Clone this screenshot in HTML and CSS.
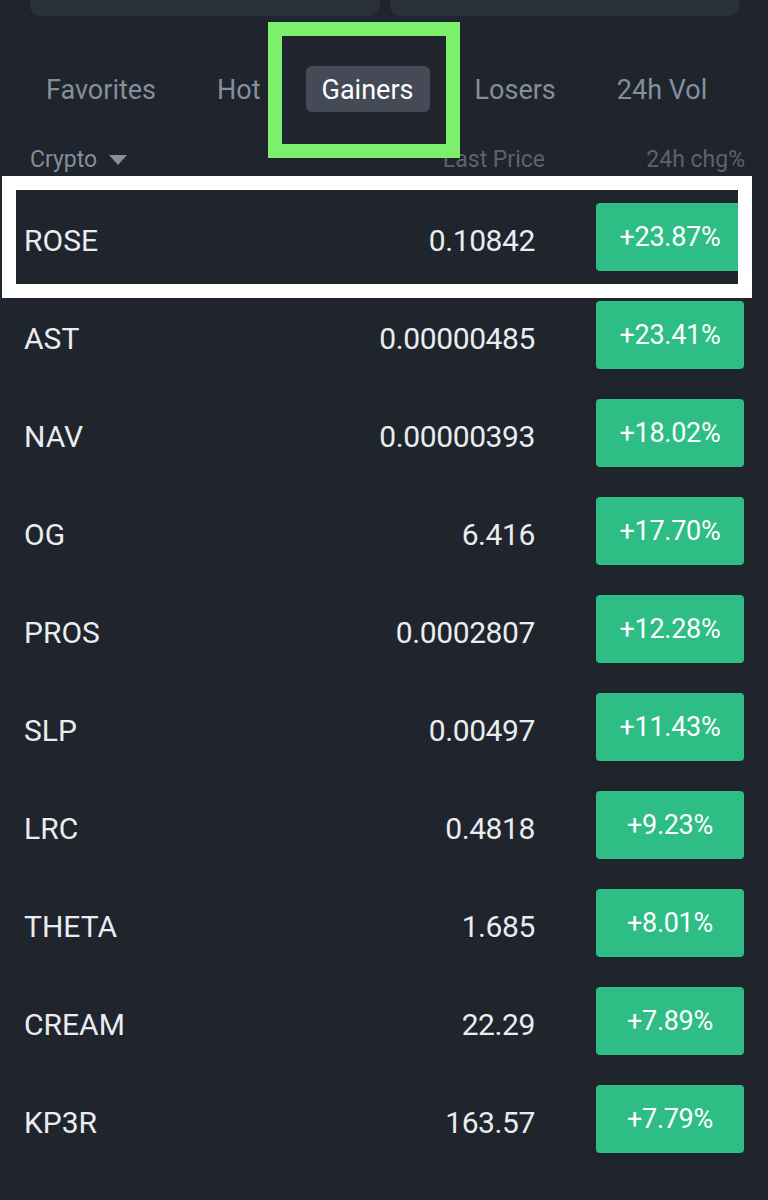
FILE: index.html
```html
<!DOCTYPE html>
<html>
<head>
<meta charset="utf-8">
<link rel="stylesheet" href="styles.css">
</head>
<body>
<div class="page">
  <div class="top-cards">
    <div class="card"></div>
    <div class="card"></div>
  </div>
  <nav class="tabs">
    <span class="tab">Favorites</span>
    <span class="tab">Hot</span>
    <span class="tab active">Gainers</span>
    <span class="tab">Losers</span>
    <span class="tab">24h Vol</span>
  </nav>
  <div class="head">
    <span class="h-crypto">Crypto <span class="caret"></span></span>
    <span class="h-price">Last Price</span>
    <span class="h-chg">24h chg%</span>
  </div>
  <div class="list">
    <div class="row"><span class="sym">ROSE</span><span class="price">0.10842</span><span class="chg">+23.87%</span></div>
    <div class="row"><span class="sym">AST</span><span class="price">0.00000485</span><span class="chg">+23.41%</span></div>
    <div class="row"><span class="sym">NAV</span><span class="price">0.00000393</span><span class="chg">+18.02%</span></div>
    <div class="row"><span class="sym">OG</span><span class="price">6.416</span><span class="chg">+17.70%</span></div>
    <div class="row"><span class="sym">PROS</span><span class="price">0.0002807</span><span class="chg">+12.28%</span></div>
    <div class="row"><span class="sym">SLP</span><span class="price">0.00497</span><span class="chg">+11.43%</span></div>
    <div class="row"><span class="sym">LRC</span><span class="price">0.4818</span><span class="chg">+9.23%</span></div>
    <div class="row"><span class="sym">THETA</span><span class="price">1.685</span><span class="chg">+8.01%</span></div>
    <div class="row"><span class="sym">CREAM</span><span class="price">22.29</span><span class="chg">+7.89%</span></div>
    <div class="row"><span class="sym">KP3R</span><span class="price">163.57</span><span class="chg">+7.79%</span></div>
  </div>
  <div class="mark-green"></div>
  <div class="mark-white"></div>
</div>
</body>
</html>
```
FILE: styles.css
```css
html, body {
  margin: 0;
  padding: 0;
  background: #1f242d;
}
.page {
  position: relative;
  width: 768px;
  height: 1200px;
  overflow: hidden;
  font-family: Roboto, "Liberation Sans", sans-serif;
  background: #1f242d;
}
.top-cards {
  display: flex;
  gap: 10px;
  padding: 0 29px 0 30px;
  height: 16px;
}
.card {
  flex: 1;
  background: #2a303a;
  border-radius: 0 0 10px 10px;
}
.tabs {
  display: flex;
  align-items: center;
  gap: 29px;
  margin-top: 50px;
  padding-left: 30px;
}
.tab {
  height: 46px;
  line-height: 48px;
  padding: 0 16px;
  font-size: 27px;
  color: #848e9c;
  border-radius: 6px;
}
.tab.active {
  background: #444b57;
  color: #ffffff;
}
.head {
  display: flex;
  align-items: center;
  margin-top: 34px;
  padding: 0 23px 0 30px;
  height: 26px;
  font-size: 23px;
}
.h-crypto {
  flex: 1;
  color: #848e9c;
  display: flex;
  align-items: center;
  gap: 12px;
}
.caret {
  width: 0;
  height: 0;
  border-left: 9px solid transparent;
  border-right: 9px solid transparent;
  border-top: 10px solid #848e9c;
  margin-top: 2px;
}
.h-price {
  color: #5c6370;
}
.h-chg {
  width: 200px;
  text-align: right;
  color: #5c6370;
}
.list {
  margin-top: 16px;
}
.row {
  display: flex;
  align-items: center;
  height: 98px;
  padding: 0 24px;
  color: #eaecef;
  font-size: 30px;
}
.sym {
  flex: 1;
  padding-top: 6px;
}
.price {
  margin-right: 61px;
  padding-top: 6px;
  letter-spacing: -0.4px;
}
.chg {
  width: 148px;
  height: 68px;
  line-height: 68px;
  text-align: center;
  background: #2ebd85;
  border-radius: 4px;
  font-size: 27px;
  color: #ffffff;
  letter-spacing: -0.3px;
}
.mark-green {
  position: absolute;
  left: 268px;
  top: 22px;
  width: 164px;
  height: 108px;
  border: 14px solid #7cf06a;
}
.mark-white {
  position: absolute;
  left: 2px;
  top: 176px;
  width: 722px;
  height: 94px;
  border: 14px solid #ffffff;
}
```
